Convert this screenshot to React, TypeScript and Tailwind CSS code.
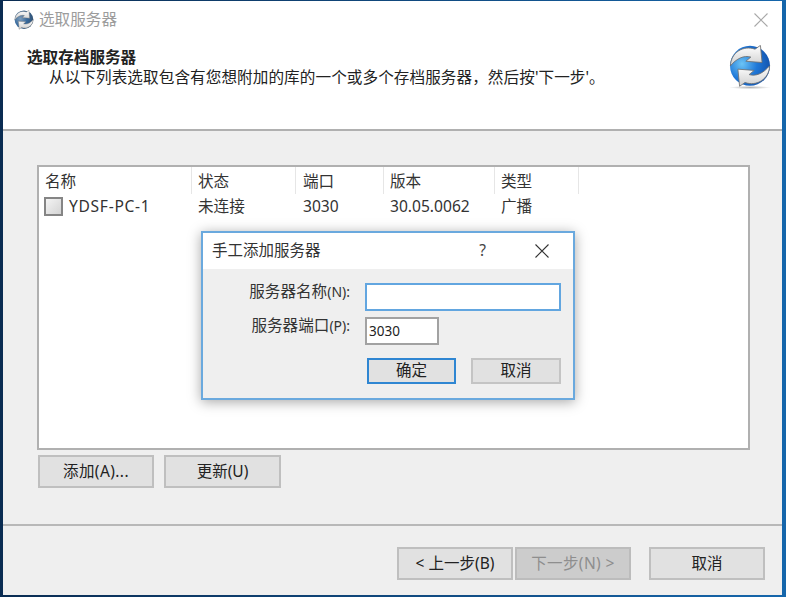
import * as React from "react";

const font = { fontFamily: '"Noto Sans", "Noto Sans CJK SC", sans-serif' };

const columns = [
  { label: "名称", width: "w-[153px]", pad: "pl-[6px]" },
  { label: "状态", width: "w-[104px]", pad: "pl-[6px]" },
  { label: "端口", width: "w-[88px]", pad: "pl-[7px]" },
  { label: "版本", width: "w-[111px]", pad: "pl-[6px]" },
  { label: "类型", width: "w-[84px]", pad: "pl-[6px]" },
];

// Blue globe with two white arrows, used in the title bar (muted) and the header
function SyncGlobe({ id, muted, className }: { id: string; muted?: boolean; className?: string }) {
  return (
    <svg viewBox="0 0 100 108" className={className}>
      <defs>
        <radialGradient id={`${id}-ball`} cx="0.3" cy="0.45" r="0.75">
          <stop offset="0" stopColor={muted ? "#7d9cba" : "#6cc4f5"} />
          <stop offset="0.5" stopColor={muted ? "#35689c" : "#1f78d8"} />
          <stop offset="1" stopColor={muted ? "#33506e" : "#124fa8"} />
        </radialGradient>
        <linearGradient id={`${id}-arrow`} x1="0" y1="0" x2="0" y2="1">
          <stop offset="0" stopColor="#ffffff" />
          <stop offset="1" stopColor="#cfcfcf" />
        </linearGradient>
        <radialGradient id={`${id}-shadow`}>
          <stop offset="0" stopColor="#000000" stopOpacity="0.3" />
          <stop offset="1" stopColor="#000000" stopOpacity="0" />
        </radialGradient>
      </defs>
      {!muted && <ellipse cx="50" cy="102" rx="50" ry="4" fill={`url(#${id}-shadow)`} />}
      <circle cx="50" cy="50" r="48" fill={`url(#${id}-ball)`} />
      <path
        d="M3 50C4 18 34 0 62 10L75 1L79 42L40 39L52 29C36 24 18 32 3 50Z"
        fill={`url(#${id}-arrow)`}
        stroke="#6f6f6f"
        strokeWidth="2"
        strokeLinejoin="round"
      />
      <path
        d="M97 50C96 82 66 100 38 90L25 99L21 58L60 61L48 71C64 76 82 68 97 50Z"
        fill={`url(#${id}-arrow)`}
        stroke="#6f6f6f"
        strokeWidth="2"
        strokeLinejoin="round"
      />
    </svg>
  );
}

function CloseIcon({ color, className }: { color: string; className?: string }) {
  return (
    <svg viewBox="0 0 14 14" className={className}>
      <path d="M0.5 0.5L13.5 13.5M13.5 0.5L0.5 13.5" stroke={color} strokeWidth="1.1" fill="none" />
    </svg>
  );
}

function WinButton({ children, className }: { children: React.ReactNode; className?: string }) {
  return (
    <button className={`flex h-[33px] items-center justify-center border-2 text-[15.5px] ${className ?? ""}`}>
      {children}
    </button>
  );
}

const normalButton = "border-[#bfbfbf] bg-[#e1e1e1] text-[#222222]";

function AddServerDialog() {
  return (
    <div className="absolute left-[201px] top-[231px] h-[169px] w-[374px] border-2 border-[#6aa9de] bg-[#efefef] shadow-[0_2px_12px_rgba(0,0,0,0.35)]">
      <div className="flex h-[36px] items-center bg-white pl-[9px] text-[15.5px] text-[#333333]">
        <span>手工添加服务器</span>
        <span className="ml-[154px] w-[16px] text-center text-[#444444]">?</span>
        <CloseIcon color="#333333" className="ml-[44px] h-[14px] w-[14px]" />
      </div>
      <div className="grid grid-cols-[160px_auto] items-start gap-x-[2px] gap-y-[6px] pt-[14px]">
        <label className="whitespace-nowrap pr-[13px] text-right text-[15.6px] leading-[16px] text-[#333333]">
          服务器名称<span className="text-[14px]">(N):</span>
        </label>
        <input
          readOnly
          className="h-[28px] w-[196px] border-2 border-[#62a6e0] bg-white outline-none"
        />
        <label className="whitespace-nowrap pr-[13px] text-right text-[15.6px] leading-[16px] text-[#333333]">
          服务器端口<span className="text-[14px]">(P):</span>
        </label>
        <input
          readOnly
          defaultValue="3030"
          className="h-[28px] w-[74px] border-2 border-[#a2a2a2] bg-white pl-[2px] text-[13.5px] text-[#222222] outline-none"
        />
      </div>
      <div className="mt-[13px] flex pl-[164px]">
        <button className="flex h-[26px] w-[89px] items-center justify-center border-2 border-[#2f86d2] bg-[#e1e1e1] text-[15.5px] text-[#222222]">
          确定
        </button>
        <button className="ml-[15px] flex h-[26px] w-[90px] items-center justify-center border-2 border-[#c4c4c4] bg-[#e1e1e1] text-[15.5px] text-[#222222]">
          取消
        </button>
      </div>
    </div>
  );
}

export default function App() {
  return (
    <div
      className="relative h-[597px] w-[786px] overflow-hidden bg-gradient-to-r from-[#0a2c52] to-[#1566ab] pl-[3px] pt-[1px]"
      style={font}
    >
      <div className="flex h-[594px] w-[779px] flex-col bg-[#efefef]">
        {/* Title bar and wizard header */}
        <div className="h-[130px] shrink-0 border-b-2 border-[#b0b0b0] bg-white">
          <div className="flex h-[38px] items-center">
            <SyncGlobe id="small" muted className="ml-[11px] h-[21px] w-[20px]" />
            <span className="ml-[5px] text-[15.6px] text-[#9c9c9c]">选取服务器</span>
            <CloseIcon color="#a8a8a8" className="ml-[637px] h-[14px] w-[14px]" />
          </div>
          <div className="flex">
            <div className="pl-[24px] pt-[8px] text-[15.6px] leading-[20px] text-[#222222]">
              <div className="font-bold">选取存档服务器</div>
              <div className="pl-[22px] tracking-[0.08px]">从以下列表选取包含有您想附加的库的一个或多个存档服务器，然后按'下一步'。</div>
            </div>
            <SyncGlobe id="big" className="absolute left-[729px] top-[45px] h-[45px] w-[42px]" />
          </div>
        </div>

        {/* Server list */}
        <div className="h-[393px] shrink-0 pl-[34px] pt-[34px]">
          <div className="h-[285px] w-[713px] border-2 border-[#b0b0b0] bg-white text-[15.6px] text-[#333333]">
            <div className="flex h-[27px]">
              {columns.map((c) => (
                <div key={c.label} className={`${c.width} ${c.pad} border-r border-[#e6e6e6] leading-[28px]`}>
                  {c.label}
                </div>
              ))}
            </div>
            <div className="flex h-[26px] items-center">
              <div className="flex w-[153px] items-center pl-[5px]">
                <span className="h-[19px] w-[19px] border-2 border-[#858585] bg-gradient-to-br from-[#f4f4f4] to-[#d4d4d4]" />
                <span className="ml-[6px] tracking-[0.7px]">YDSF-PC-1</span>
              </div>
              <div className="w-[104px] pl-[6px]">未连接</div>
              <div className="w-[88px] pl-[7px]">3030</div>
              <div className="w-[111px] pl-[6px]">30.05.0062</div>
              <div className="w-[84px] pl-[6px]">广播</div>
            </div>
          </div>
          <div className="mt-[5px] flex pl-px">
            <WinButton className={`w-[116px] tracking-[0.4px] ${normalButton}`}>添加(A)...</WinButton>
            <WinButton className={`ml-[10px] w-[117px] ${normalButton}`}>更新(U)</WinButton>
          </div>
        </div>

        {/* Wizard footer */}
        <div className="flex flex-1 border-t-2 border-[#b8b8b8] pl-[394px] pt-[21px]">
          <WinButton className={`w-[116px] ${normalButton}`}>&lt; 上一步(B)</WinButton>
          <WinButton className="ml-[2px] w-[116px] border-[#bcbcbc] bg-[#cccccc] tracking-[0.4px] text-[#8e8e8e]">下一步(N) &gt;</WinButton>
          <WinButton className={`ml-[18px] w-[116px] ${normalButton}`}>取消</WinButton>
        </div>
      </div>
      <AddServerDialog />
    </div>
  );
}
